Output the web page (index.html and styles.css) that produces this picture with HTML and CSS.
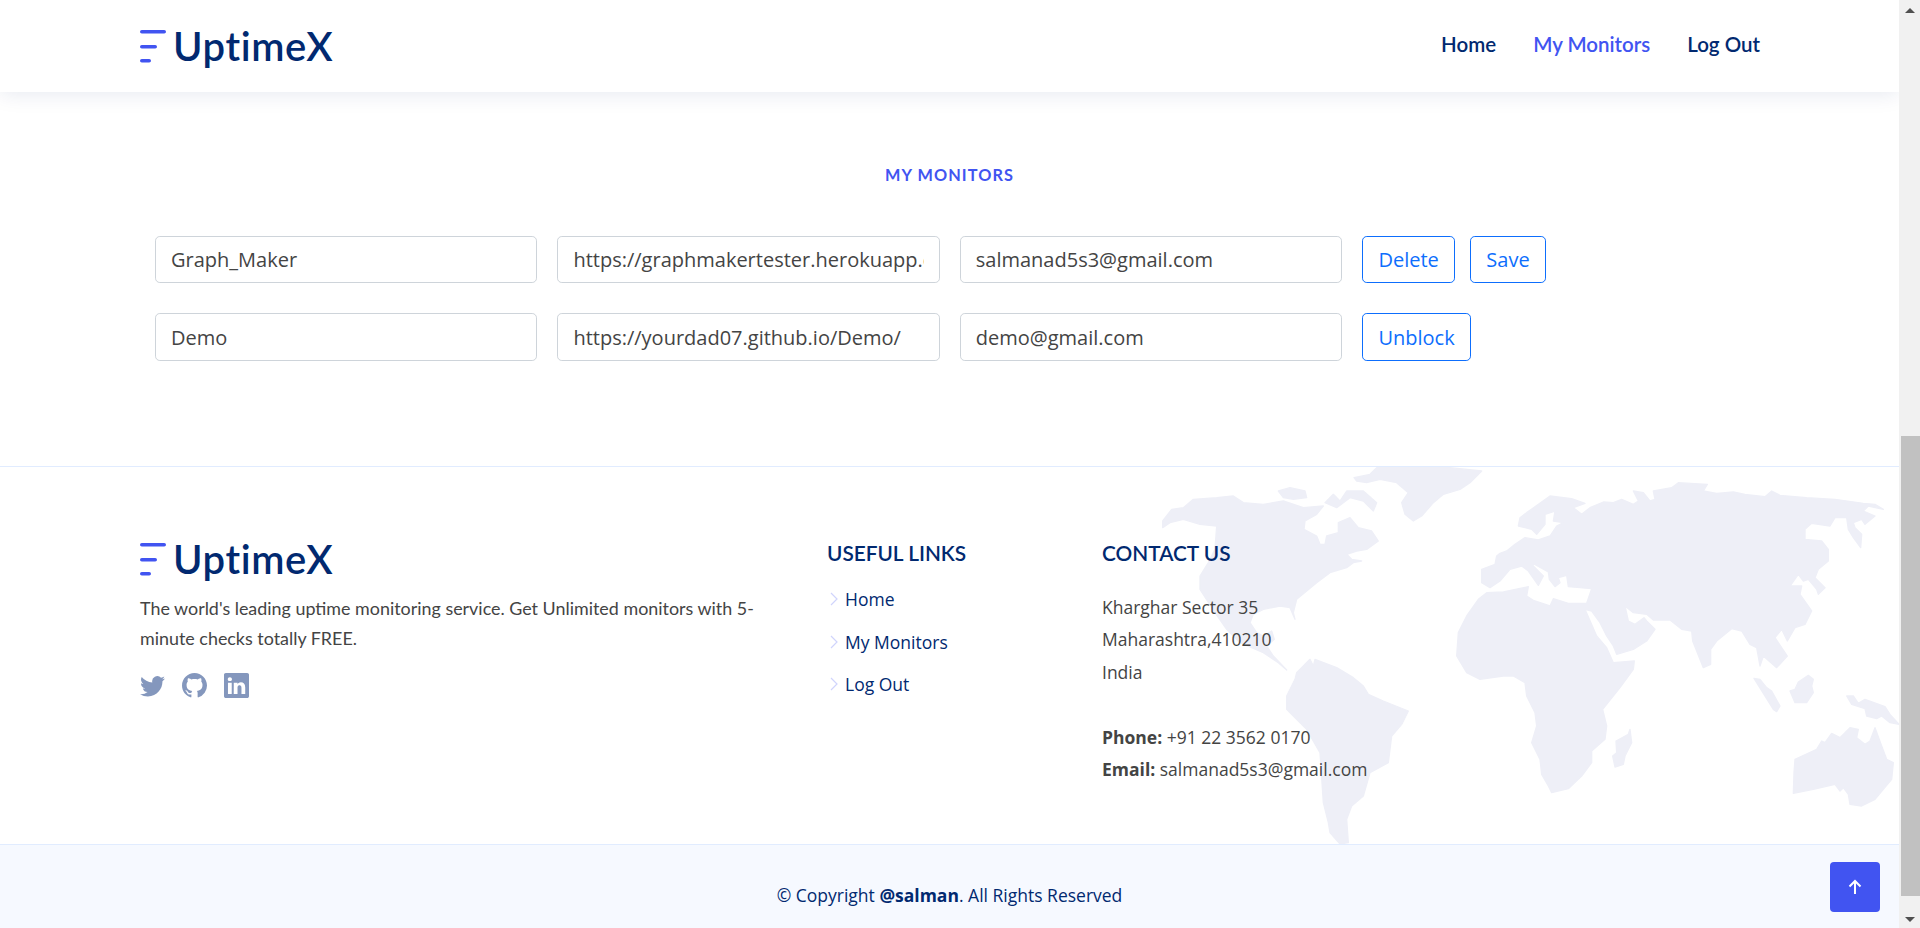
FILE: index.html
```html
<!DOCTYPE html>
<html lang="en">
<head>
<meta charset="utf-8">
<title>UptimeX</title>
<link rel="stylesheet" href="styles.css">
</head>
<body>
<div class="page">
  <header class="header">
    <a class="logo" href="#">
      <svg class="logo-mark" viewBox="0 0 26 33"><rect width="26" height="3.6" rx="1.8"/><rect y="15" width="17" height="3.6" rx="1.8"/><rect y="29" width="11" height="3.6" rx="1.8"/></svg>
      <span class="logo-text">UptimeX</span>
    </a>
    <nav class="nav">
      <a href="#">Home</a>
      <a href="#" class="active">My Monitors</a>
      <a href="#">Log Out</a>
    </nav>
  </header>

  <main class="main">
    <h2 class="section-title">My Monitors</h2>
    <form class="monitor-row">
      <input class="field" value="Graph_Maker">
      <input class="field" value="https://graphmakertester.herokuapp.com/">
      <input class="field" value="salmanad5s3@gmail.com">
      <div class="actions">
        <button type="button" class="btn">Delete</button>
        <button type="button" class="btn">Save</button>
      </div>
    </form>
    <form class="monitor-row">
      <input class="field" value="Demo">
      <input class="field" value="https://yourdad07.github.io/Demo/">
      <input class="field" value="demo@gmail.com">
      <div class="actions">
        <button type="button" class="btn">Unblock</button>
      </div>
    </form>
  </main>

  <footer class="footer">
    <div class="footer-top">
      <svg class="map" viewBox="0 0 2250 1134" aria-hidden="true">
        <polygon points="38,165 65,130 100,125 130,100 200,95 250,90 280,110 340,115 400,105 460,125 520,120 500,145 465,165 462,190 500,210 510,235 525,235 530,210 565,200 565,170 600,155 625,185 665,195 685,225 650,250 620,255 590,265 605,280 635,285 610,290 590,305 540,320 500,350 440,400 430,440 435,460 420,425 390,420 340,430 310,445 300,470 320,500 340,510 365,495 373,520 350,540 370,570 410,612 385,590 340,560 270,530 230,490 195,440 150,370 150,330 175,290 195,250 200,180 150,175 100,160 60,170 38,185"/>
        <polygon points="385,75 420,65 465,75 470,95 430,100 400,95"/>
        <polygon points="525,110 550,85 570,105 590,75 640,75 680,110 670,135 640,105 600,95 560,125"/>
        <polygon points="612,35 660,25 680,5 900,5 995,15 960,50 930,70 880,85 850,110 815,150 790,165 765,145 755,110 775,80 740,50 690,40 650,50 620,45"/>
        <polygon points="440,620 480,580 490,600 495,580 560,605 610,635 640,660 655,685 700,705 775,735 755,775 725,810 715,890 660,920 640,990 605,1020 590,1060 595,1130 570,1134 540,1100 535,1070 520,1010 510,860 470,790 410,730 410,690 435,640"/>
        <g transform="translate(1050 0)">
          <polygon points="-40,380 -65,400 -100,450 -125,500 -130,570 -100,620 -60,640 10,630 40,630 75,650 80,690 105,740 110,780 95,830 120,880 125,925 145,960 155,980 205,968 245,930 275,890 275,855 315,820 320,780 308,730 360,665 400,610 403,585 340,590 320,545 290,510 255,430 275,435 300,470 320,510 340,540 350,565 400,550 440,525 465,490 440,465 432,455 405,475 385,465 375,420 400,440 440,445 460,462 510,462 545,490 575,495 578,525 610,605 632,595 632,550 650,525 695,488 725,495 750,535 770,545 780,600 790,570 830,605 862,570 825,515 845,490 862,525 885,485 915,475 935,435 900,385 905,360 870,360 895,325 910,345 925,340 950,370 955,385 975,365 945,335 955,310 985,285 985,250 965,225 915,220 915,190 935,172 990,180 1005,155 1040,155 1045,190 1060,215 1082,245 1085,205 1065,185 1060,170 1085,160 1095,175 1125,150 1090,135 1105,120 1150,130 1125,115 1090,112 1005,100 920,95 840,88 815,75 795,92 735,85 700,78 650,82 610,75 622,55 535,50 515,65 460,75 465,100 450,105 430,80 400,75 415,105 400,115 365,100 340,110 310,108 270,125 245,145 220,125 255,112 215,98 150,90 80,140 60,155 55,180 95,190 110,205 135,175 135,145 165,135 160,165 190,170 170,180 150,210 115,222 75,215 45,235 20,255 0,262 -10,270 -15,295 -55,310 -55,350 -30,365 0,345 30,310 65,300 85,315 115,358 130,330 100,300 95,290 145,318 148,340 165,362 180,350 175,335 200,328 205,362 275,368 260,412 205,412 160,398 150,420 100,403 80,390 85,362 10,378"/>
          <polygon points="348,825 385,805 390,790 395,830 375,870 370,895 345,903 338,870 350,860"/>
          <polygon points="762,637 780,640 800,665 815,675 840,720 830,737 820,730"/>
          <polygon points="870,675 885,670 895,648 925,628 940,640 935,660 940,680 920,710 885,710"/>
          <polygon points="1040,690 1060,690 1075,712 1095,700 1155,722 1170,745 1197,775 1170,770 1145,750 1130,758 1100,750 1095,728 1055,715"/>
          <polygon points="885,880 950,850 965,825 975,830 995,802 1020,815 1050,785 1075,790 1070,815 1095,835 1110,825 1125,785 1145,840 1160,880 1180,890 1175,940 1125,1000 1085,1020 1050,1015 1045,985 1030,965 1020,975 1005,955 940,970 880,982 882,920"/>
        </g>
      </svg>
      <div class="footer-grid">
        <section class="about">
          <a class="logo" href="#">
            <svg class="logo-mark" viewBox="0 0 26 33"><rect width="26" height="3.6" rx="1.8"/><rect y="15" width="17" height="3.6" rx="1.8"/><rect y="29" width="11" height="3.6" rx="1.8"/></svg>
            <span class="logo-text">UptimeX</span>
          </a>
          <p class="about-text">The world's leading uptime monitoring service. Get Unlimited monitors with 5-minute checks totally FREE.</p>
          <div class="social">
            <a href="#" aria-label="Twitter"><svg viewBox="0 0 16 16"><path d="M5.026 15c6.038 0 9.341-5.003 9.341-9.334 0-.14 0-.282-.006-.422A6.685 6.685 0 0 0 16 3.542a6.658 6.658 0 0 1-1.889.518 3.301 3.301 0 0 0 1.447-1.817 6.533 6.533 0 0 1-2.087.793A3.286 3.286 0 0 0 7.875 6.03a9.325 9.325 0 0 1-6.767-3.429 3.289 3.289 0 0 0 1.018 4.382A3.323 3.323 0 0 1 .64 6.575v.045a3.288 3.288 0 0 0 2.632 3.218 3.203 3.203 0 0 1-.865.115 3.23 3.23 0 0 1-.614-.057 3.283 3.283 0 0 0 3.067 2.277A6.588 6.588 0 0 1 .78 13.58a6.32 6.32 0 0 1-.78-.045A9.344 9.344 0 0 0 5.026 15z"/></svg></a>
            <a href="#" aria-label="GitHub"><svg viewBox="0 0 16 16"><path d="M8 0C3.58 0 0 3.58 0 8c0 3.54 2.29 6.53 5.47 7.59.4.07.55-.17.55-.38 0-.19-.01-.82-.01-1.49-2.01.37-2.53-.49-2.69-.94-.09-.23-.48-.94-.82-1.13-.28-.15-.68-.52-.01-.53.63-.01 1.08.58 1.23.82.72 1.21 1.87.87 2.33.66.07-.52.28-.87.51-1.07-1.78-.2-3.64-.89-3.64-3.95 0-.87.31-1.59.82-2.15-.08-.2-.36-1.02.08-2.12 0 0 .67-.21 2.2.82.64-.18 1.32-.27 2-.27.68 0 1.36.09 2 .27 1.53-1.04 2.2-.82 2.2-.82.44 1.1.16 1.92.08 2.12.51.56.82 1.27.82 2.15 0 3.07-1.87 3.75-3.65 3.95.29.25.54.73.54 1.48 0 1.07-.01 1.93-.01 2.2 0 .21.15.46.55.38A8.012 8.012 0 0 0 16 8c0-4.42-3.58-8-8-8z"/></svg></a>
            <a href="#" aria-label="LinkedIn"><svg viewBox="0 0 16 16"><path d="M0 1.146C0 .513.526 0 1.175 0h13.65C15.474 0 16 .513 16 1.146v13.708c0 .633-.526 1.146-1.175 1.146H1.175C.526 16 0 15.487 0 14.854V1.146zm4.943 12.248V6.169H2.542v7.225h2.401zm-1.2-8.212c.837 0 1.358-.554 1.358-1.248-.015-.709-.52-1.248-1.342-1.248-.822 0-1.359.54-1.359 1.248 0 .694.521 1.248 1.327 1.248h.016zm4.908 8.212V9.359c0-.216.016-.432.08-.586.173-.431.568-.878 1.232-.878.869 0 1.216.662 1.216 1.634v3.865h2.401V9.25c0-2.22-1.184-3.252-2.764-3.252-1.274 0-1.845.7-2.165 1.193v.025h-.016a5.54 5.54 0 0 1 .016-.025V6.169h-2.4c.03.678 0 7.225 0 7.225h2.4z"/></svg></a>
          </div>
        </section>
        <section class="links">
          <h4 class="footer-heading">Useful Links</h4>
          <ul class="link-list">
            <li><svg viewBox="0 0 8 14"><path d="M1 1l6 6-6 6"/></svg><a href="#">Home</a></li>
            <li><svg viewBox="0 0 8 14"><path d="M1 1l6 6-6 6"/></svg><a href="#">My Monitors</a></li>
            <li><svg viewBox="0 0 8 14"><path d="M1 1l6 6-6 6"/></svg><a href="#">Log Out</a></li>
          </ul>
        </section>
        <section class="contact">
          <h4 class="footer-heading">Contact Us</h4>
          <p class="contact-text">Kharghar Sector 35<br>Maharashtra,410210<br>India<br><br><strong>Phone:</strong> +91 22 3562 0170<br><strong>Email:</strong> salmanad5s3@gmail.com</p>
        </section>
      </div>
    </div>
    <div class="copyright">© Copyright <strong>@salman</strong>. All Rights Reserved</div>
  </footer>

  <a href="#" class="back-to-top" aria-label="Back to top"><svg viewBox="0 0 16 18"><path d="M8 16V3M2.500 8.500L8 3l5.500 5.500"/></svg></a>
</div>
<aside class="scrollbar" aria-hidden="true">
  <span class="arrow-up"></span>
  <span class="thumb"></span>
  <span class="arrow-down"></span>
</aside>
</body>
</html>
```

FILE: styles.css
```css
* { box-sizing: border-box; }
html, body { margin: 0; height: 928px; overflow: hidden; }
body {
  display: flex;
  font-family: "Open Sans", "Liberation Sans", sans-serif;
  font-size: 16px;
  color: #444;
  background: #fff;
}
a { color: inherit; text-decoration: none; }

.page { position: relative; flex: 1; min-width: 0; display: flex; flex-direction: column; overflow: hidden; }

.header {
  position: relative;
  z-index: 2;
  height: 92px;
  flex: none;
  display: flex;
  align-items: center;
  justify-content: space-between;
  padding: 0 139px 0 140px;
  background: #fff;
  box-shadow: 0 2px 20px rgba(1, 41, 112, .1);
}
.logo { display: flex; align-items: center; gap: 7px; height: 48px; }
.logo-mark { width: 26px; height: 33px; fill: #4154f1; flex: none; }
.logo-text {
  font-family: Lato, "Open Sans", sans-serif;
  font-size: 40px;
  line-height: 48px;
  font-weight: 600;
  letter-spacing: .6px;
  color: #012970;
}
.nav {
  display: flex;
  gap: 37px;
  margin-bottom: 5px;
  font-family: Lato, "Open Sans", sans-serif;
  font-size: 20.500px;
  font-weight: 600;
  color: #012970;
}
.nav .active { color: #4154f1; }

.main { flex: 1; padding: 71px 0 0 155px; }
.section-title {
  margin: 0 155px 48.75px 0;
  text-align: center;
  font-family: Lato, "Open Sans", sans-serif;
  font-size: 16.3px;
  line-height: 24px;
  font-weight: 700;
  letter-spacing: 1.1px;
  text-transform: uppercase;
  color: #4154f1;
}
.monitor-row { display: flex; gap: 20px; margin-bottom: 30px; }
.field {
  width: 382.4px;
  height: 47.5px;
  padding: 0 15px;
  border: 1px solid #ced4da;
  border-radius: 4.8px;
  background: #fff;
  font: 20px "Open Sans", sans-serif;
  color: #444;
}
.actions { display: flex; gap: 15px; }
.btn {
  height: 47.5px;
  padding: 0 15.25px;
  border: 1px solid #0d6efd;
  border-radius: 4.8px;
  background: transparent;
  font: 20px "Open Sans", sans-serif;
  color: #0d6efd;
}

.footer { flex: none; }
.footer-top {
  position: relative;
  height: 379px;
  padding: 68px 0 0 140px;
  border-top: 1px solid #e1ecff;
  border-bottom: 1px solid #e1ecff;
  overflow: hidden;
}
.map {
  position: absolute;
  left: 1150px;
  top: -1px;
  width: 750px;
  height: 378px;
  fill: #eeeff7;
  stroke: #eeeff7;
  stroke-width: 4;
  stroke-linejoin: round;
}
.footer-grid { position: relative; display: grid; grid-template-columns: 687px 275px auto; }
.about-text { margin: 10px 0 20px; width: 640px; font-family: Lato, "Open Sans", sans-serif; font-size: 17.9px; line-height: 30px; }
.social { display: flex; gap: 17px; }
.social a { display: block; width: 25px; height: 25px; }
.social svg { display: block; width: 25px; height: 25px; fill: #8497bd; }
.footer-heading {
  margin: 7px 0 0;
  font-family: Lato, "Open Sans", sans-serif;
  font-size: 20.8px;
  line-height: 22px;
  font-weight: 600;
  text-transform: uppercase;
  color: #012970;
}
.link-list { list-style: none; margin: 14px 0 0; padding: 0; color: #012970; }
.link-list li { display: flex; align-items: center; height: 42.5px; padding-left: 3px; gap: 7px; font-size: 17.500px; }
.link-list svg { width: 8px; height: 14px; fill: none; stroke: #d0d4fc; stroke-width: 1.2; flex: none; }
.contact-text { margin: 27px 0 0; font-size: 17.500px; line-height: 32.4px; }
.copyright { height: 83px; padding-top: 34px; text-align: center; font-size: 17.500px; line-height: 32px; background: #f6f9ff; color: #012970; }

.back-to-top {
  position: absolute;
  right: 19px;
  bottom: 16px;
  width: 50px;
  height: 50px;
  display: flex;
  align-items: center;
  justify-content: center;
  border-radius: 4px;
  background: #4154f1;
}
.back-to-top svg { width: 16px; height: 18px; fill: none; stroke: #fff; stroke-width: 2; }

.scrollbar { flex: none; width: 21px; height: 928px; display: flex; flex-direction: column; align-items: flex-end; background: #f1f1f1; }
.thumb { width: 19px; height: 460px; margin-top: 423px; background: #c1c1c1; }
.arrow-up, .arrow-down { align-self: center; width: 0; height: 0; border-left: 5px solid transparent; border-right: 5px solid transparent; }
.arrow-up { margin-top: 8px; border-bottom: 5px solid #505050; }
.arrow-down { margin-top: 21px; border-top: 5px solid #505050; }
```
